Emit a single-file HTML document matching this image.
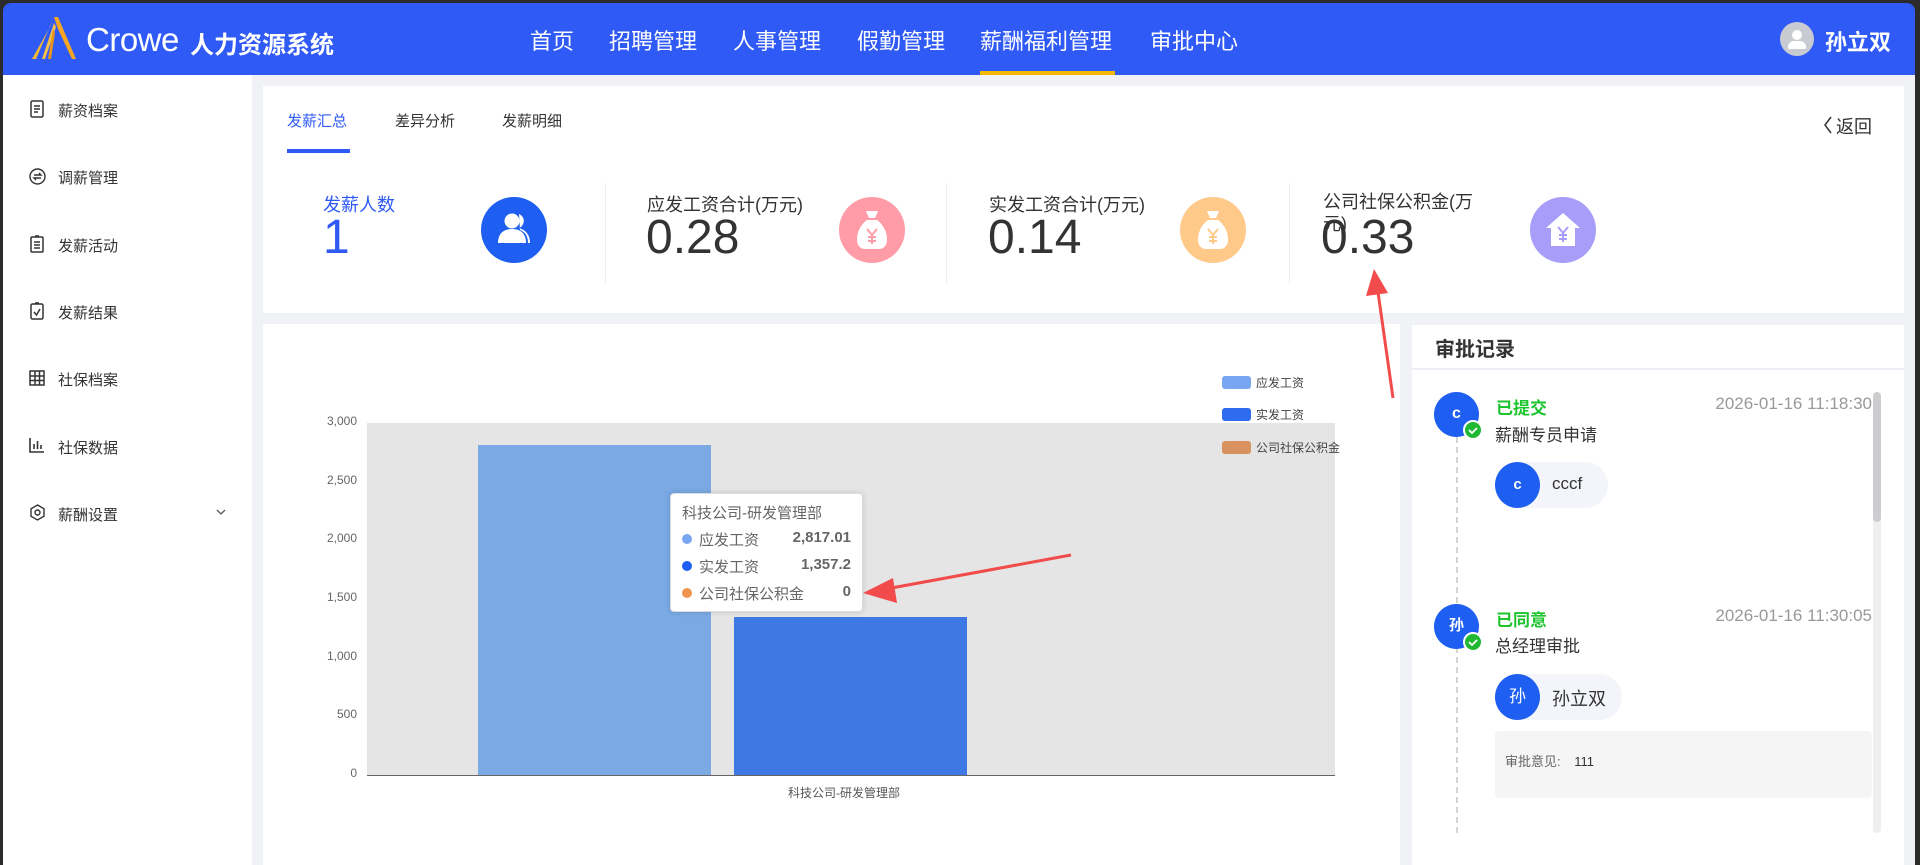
<!DOCTYPE html>
<html><head><meta charset="utf-8"><style>
*{margin:0;padding:0;box-sizing:border-box}
body{width:1920px;height:865px;overflow:hidden;background:#2b2b2b;font-family:"Liberation Sans","Noto Sans CJK SC",sans-serif;position:relative;color:#333}
.a{position:absolute;white-space:nowrap}
#hdr{position:absolute;left:3px;top:3px;width:1912px;height:72px;background:#2F5AF6;border-radius:8px 8px 0 0}
#page{position:absolute;left:3px;top:75px;width:1912px;height:790px;background:#F0F2F5}
.nav{position:absolute;top:24px;font-size:22px;color:#fff}
.side{position:absolute;left:3px;top:75px;width:249px;height:790px;background:#fff}
.si{position:absolute;left:58px;font-size:15px;color:#333}
.card{position:absolute;background:#fff}
.circ{position:absolute;width:66px;height:66px;border-radius:50%}
.st{position:absolute;font-size:18px;color:#333}
.big{position:absolute;font-size:48px;color:#333}
.yl{position:absolute;width:60px;text-align:right;font-size:12px;color:#666}
</style></head><body>
<div id="hdr"></div>
<div id="page"></div>
<svg class="a" style="left:28px;top:17px" width="50" height="44" viewBox="0 0 50 44"><polygon points="26,0 30,0 48,42 44,42 30,12" fill="#F5A623"/><polygon points="26,0 22,10 4,42 8,42" fill="#F5B82E"/><polygon points="26,6 14,42 17,42 28,10" fill="#F7C04A"/><polygon points="25,12 20,42 23,42 27,16" fill="#E8951A"/></svg>
<div class="a" style="left:86px;top:21px;font-size:33px;color:#fff;letter-spacing:-0.5px">Crowe</div>
<div class="a" style="left:190px;top:25px;font-size:24px;color:#fff;font-weight:bold">人力资源系统</div>
<div class="nav" style="left:530px">首页</div>
<div class="nav" style="left:609px">招聘管理</div>
<div class="nav" style="left:733px">人事管理</div>
<div class="nav" style="left:857px">假勤管理</div>
<div class="nav" style="left:980px">薪酬福利管理</div>
<div class="a" style="left:980px;top:71px;width:135px;height:4px;background:#F5B800"></div>
<div class="nav" style="left:1150px">审批中心</div>
<div class="a" style="left:1780px;top:22px;width:34px;height:34px;border-radius:50%;background:#C8CBD2"></div>
<div class="a" style="left:1792px;top:30px;width:10px;height:10px;border-radius:50%;background:#fff"></div>
<div class="a" style="left:1788px;top:41px;width:18px;height:8px;border-radius:6px 6px 1px 1px;background:#fff"></div>
<div class="a" style="left:1825px;top:25px;font-size:22px;color:#fff;font-weight:bold">孙立双</div>

<div class="side"></div>
<svg class="a" style="left:29px;top:100px" width="16" height="18" viewBox="0 0 16 18" fill="none" stroke="#333" stroke-width="1.5"><rect x="2" y="1" width="12" height="16" rx="1.5"/><path d="M5 6h6M5 9h6M5 12h4"/></svg>
<div class="si" style="top:100px">薪资档案</div>
<svg class="a" style="left:29px;top:168px" width="17" height="17" viewBox="0 0 17 17" fill="none" stroke="#333" stroke-width="1.4"><circle cx="8.5" cy="8.5" r="7.5"/><path d="M5 7h7l-2-2M12 10H5l2 2"/></svg>
<div class="si" style="top:167px">调薪管理</div>
<svg class="a" style="left:29px;top:235px" width="16" height="18" viewBox="0 0 16 18" fill="none" stroke="#333" stroke-width="1.5"><rect x="2" y="2" width="12" height="15" rx="1"/><path d="M5 7h6M5 10h6M5 13h6M6 1h4"/></svg>
<div class="si" style="top:235px">发薪活动</div>
<svg class="a" style="left:29px;top:302px" width="16" height="18" viewBox="0 0 16 18" fill="none" stroke="#333" stroke-width="1.5"><rect x="2" y="2" width="12" height="15" rx="1.5"/><path d="M5 10l2.5 3L11 7M6 1h4"/></svg>
<div class="si" style="top:302px">发薪结果</div>
<svg class="a" style="left:29px;top:370px" width="16" height="16" viewBox="0 0 16 16" fill="none" stroke="#333" stroke-width="1.5"><rect x="1" y="1" width="14" height="14"/><path d="M1 6h14M1 10.5h14M6 1v14M10.5 1v14"/></svg>
<div class="si" style="top:369px">社保档案</div>
<svg class="a" style="left:29px;top:437px" width="16" height="16" viewBox="0 0 16 16" fill="none" stroke="#333" stroke-width="1.6"><path d="M1 1v14h14M5 12V7M8.5 12V4M12 12V8"/></svg>
<div class="si" style="top:437px">社保数据</div>
<svg class="a" style="left:29px;top:504px" width="17" height="17" viewBox="0 0 17 17" fill="none" stroke="#333" stroke-width="1.4"><path d="M8.5 1l6.5 3.75v7.5L8.5 16 2 12.25v-7.5z"/><circle cx="8.5" cy="8.5" r="2.5"/></svg>
<div class="si" style="top:504px">薪酬设置</div>
<svg class="a" style="left:216px;top:508px" width="10" height="8" viewBox="0 0 10 8" fill="none" stroke="#555" stroke-width="1.3"><path d="M1 2l4 4 4-4"/></svg>

<div class="card" style="left:263px;top:86px;width:1641px;height:227px"></div>
<div class="a" style="left:287px;top:110px;font-size:15px;color:#2F5AF6">发薪汇总</div>
<div class="a" style="left:287px;top:149px;width:63px;height:4px;background:#2F5AF6"></div>
<div class="a" style="left:395px;top:110px;font-size:15px;color:#333">差异分析</div>
<div class="a" style="left:502px;top:110px;font-size:15px;color:#333">发薪明细</div>
<svg class="a" style="left:1823px;top:115px" width="10" height="20" viewBox="0 0 10 20" fill="none" stroke="#333" stroke-width="1.5"><path d="M8 2L2 10l6 8"/></svg>
<div class="a" style="left:1836px;top:113px;font-size:18px;color:#333">返回</div>
<div class="a" style="left:605px;top:183px;width:1px;height:100px;background:#EBEEF5"></div>
<div class="a" style="left:946px;top:183px;width:1px;height:100px;background:#EBEEF5"></div>
<div class="a" style="left:1289px;top:183px;width:1px;height:100px;background:#EBEEF5"></div>

<div class="st" style="left:323px;top:191px;color:#2F5AF6">发薪人数</div>
<div class="big" style="left:323px;top:210px;color:#2F5AF6">1</div>
<div class="circ" style="left:481px;top:197px;background:#1E5EF0"></div>
<svg class="a" style="left:495px;top:211px" width="40" height="38" viewBox="0 0 40 38" fill="#fff"><circle cx="17" cy="10" r="7.5"/><path d="M3 32c0-10 6-14 14-14s14 4 14 14z"/><path d="M24 3a7.5 7.5 0 0 1 0 14c6 2 11 6 11 15h-2c0-7-3-11-8-13" /></svg>

<div class="st" style="left:647px;top:191px">应发工资合计(万元)</div>
<div class="big" style="left:646px;top:210px">0.28</div>
<div class="circ" style="left:839px;top:197px;background:#FF9CA8"></div>
<svg class="a" style="left:853px;top:209px" width="38" height="42" viewBox="0 0 38 42" fill="#fff"><path d="M13 2h12l-3 7h-6z"/><path d="M14 11h10c8 6 10 14 10 20 0 6-4 9-8 9H12c-4 0-8-3-8-9 0-6 2-14 10-20z"/><path d="M14 20l5 6 5-6M19 26v9M15 28h8M15 32h8" stroke="#FF9CA8" stroke-width="2" fill="none"/></svg>

<div class="st" style="left:989px;top:191px">实发工资合计(万元)</div>
<div class="big" style="left:988px;top:210px">0.14</div>
<div class="circ" style="left:1180px;top:197px;background:#FFC98A"></div>
<svg class="a" style="left:1194px;top:209px" width="38" height="42" viewBox="0 0 38 42" fill="#fff"><path d="M13 2h12l-3 7h-6z"/><path d="M14 11h10c8 6 10 14 10 20 0 6-4 9-8 9H12c-4 0-8-3-8-9 0-6 2-14 10-20z"/><path d="M14 20l5 6 5-6M19 26v9M15 28h8M15 32h8" stroke="#FFC98A" stroke-width="2" fill="none"/></svg>

<div class="a" style="left:1323px;top:191px;width:152px;font-size:18px;color:#333;white-space:normal;line-height:22px">公司社保公积金(万元)</div>
<div class="big" style="left:1321px;top:210px">0.33</div>
<div class="circ" style="left:1530px;top:197px;background:#A89EFA"></div>
<svg class="a" style="left:1544px;top:212px" width="38" height="36" viewBox="0 0 38 36" fill="#fff"><path d="M19 1L2 16h5v18h24V16h5z"/><path d="M14 15l5 6 5-6M19 21v9M15 23h8M15 27h8" stroke="#A89EFA" stroke-width="2" fill="none"/></svg>

<div class="card" style="left:263px;top:324px;width:1137px;height:541px"></div>
<div class="a" style="left:367px;top:423px;width:968px;height:352px;background:#E5E5E5"></div>
<div class="a" style="left:367px;top:775px;width:968px;height:1px;background:#666"></div>
<div class="yl" style="left:297px;top:414px">3,000</div>
<div class="yl" style="left:297px;top:473px">2,500</div>
<div class="yl" style="left:297px;top:531px">2,000</div>
<div class="yl" style="left:297px;top:590px">1,500</div>
<div class="yl" style="left:297px;top:649px">1,000</div>
<div class="yl" style="left:297px;top:707px">500</div>
<div class="yl" style="left:297px;top:766px">0</div>
<div class="a" style="left:478px;top:445px;width:233px;height:330px;background:#7AA9E4"></div>
<div class="a" style="left:734px;top:617px;width:233px;height:158px;background:#3D78E3"></div>
<div class="a" style="left:788px;top:784px;font-size:12px;color:#555">科技公司-研发管理部</div>
<div class="a" style="left:1222px;top:376px;width:29px;height:13px;border-radius:3px;background:#78A6F0"></div>
<div class="a" style="left:1256px;top:374px;font-size:12px;color:#444">应发工资</div>
<div class="a" style="left:1222px;top:408px;width:29px;height:13px;border-radius:3px;background:#2E6BEF"></div>
<div class="a" style="left:1256px;top:406px;font-size:12px;color:#444">实发工资</div>
<div class="a" style="left:1222px;top:441px;width:29px;height:13px;border-radius:3px;background:#D9925F"></div>
<div class="a" style="left:1256px;top:439px;font-size:12px;color:#444">公司社保公积金</div>

<div class="a" style="left:670px;top:493px;width:193px;height:119px;background:#fff;border:1px solid #ddd;border-radius:4px;box-shadow:0 0 6px rgba(0,0,0,.15)"></div>
<div class="a" style="left:682px;top:502px;font-size:15px;color:#666">科技公司-研发管理部</div>
<div class="a" style="left:682px;top:534px;width:10px;height:10px;border-radius:50%;background:#78A6F0"></div>
<div class="a" style="left:699px;top:529px;font-size:15px;color:#666">应发工资</div>
<div class="a" style="left:783px;top:529px;width:68px;text-align:right;font-size:15px;font-weight:bold;color:#666">2,817.01</div>
<div class="a" style="left:682px;top:561px;width:10px;height:10px;border-radius:50%;background:#1E5EF0"></div>
<div class="a" style="left:699px;top:556px;font-size:15px;color:#666">实发工资</div>
<div class="a" style="left:783px;top:556px;width:68px;text-align:right;font-size:15px;font-weight:bold;color:#666">1,357.2</div>
<div class="a" style="left:682px;top:588px;width:10px;height:10px;border-radius:50%;background:#F0954F"></div>
<div class="a" style="left:699px;top:583px;font-size:15px;color:#666">公司社保公积金</div>
<div class="a" style="left:783px;top:583px;width:68px;text-align:right;font-size:15px;font-weight:bold;color:#666">0</div>

<div class="card" style="left:1412px;top:325px;width:492px;height:540px"></div>
<div class="a" style="left:1435px;top:333px;font-size:20px;font-weight:bold;color:#333">审批记录</div>
<div class="a" style="left:1412px;top:368px;width:492px;height:2px;background:#EBEEF5"></div>
<div class="a" style="left:1873px;top:392px;width:8px;height:441px;border-radius:4px;background:#EFEFEF"></div>
<div class="a" style="left:1873px;top:392px;width:8px;height:130px;border-radius:4px;background:#CDCDCF"></div>
<div class="a" style="left:1456px;top:437px;width:0;height:396px;border-left:2px dashed #D5D5D5"></div>

<div class="a" style="left:1434px;top:392px;width:45px;height:45px;border-radius:50%;background:#1E5EF0;color:#fff;font-weight:bold;font-size:16px;text-align:center;line-height:44px">c</div>
<div class="a" style="left:1463px;top:420px;width:20px;height:20px;border-radius:50%;background:#21B833;border:2px solid #fff"></div>
<svg class="a" style="left:1467px;top:425px" width="12" height="10" viewBox="0 0 12 10" fill="none" stroke="#fff" stroke-width="1.8"><path d="M2 5l3 3 5-5"/></svg>
<div class="a" style="left:1496px;top:394px;font-size:17px;font-weight:bold;color:#1DC42D">已提交</div>
<div class="a" style="left:1700px;top:394px;width:172px;text-align:right;font-size:17px;color:#999">2026-01-16 11:18:30</div>
<div class="a" style="left:1495px;top:421px;font-size:17px;color:#333">薪酬专员申请</div>
<div class="a" style="left:1495px;top:462px;width:113px;height:46px;border-radius:23px;background:#F3F5FA"></div>
<div class="a" style="left:1495px;top:462px;width:45px;height:46px;border-radius:50%;background:#1E5EF0;color:#fff;font-weight:bold;font-size:15px;text-align:center;line-height:46px">c</div>
<div class="a" style="left:1552px;top:474px;font-size:17px;color:#333">cccf</div>

<div class="a" style="left:1434px;top:604px;width:45px;height:45px;border-radius:50%;background:#1E5EF0;color:#fff;font-weight:bold;font-size:15px;text-align:center;line-height:44px">孙</div>
<div class="a" style="left:1463px;top:632px;width:20px;height:20px;border-radius:50%;background:#21B833;border:2px solid #fff"></div>
<svg class="a" style="left:1467px;top:637px" width="12" height="10" viewBox="0 0 12 10" fill="none" stroke="#fff" stroke-width="1.8"><path d="M2 5l3 3 5-5"/></svg>
<div class="a" style="left:1496px;top:606px;font-size:17px;font-weight:bold;color:#1DC42D">已同意</div>
<div class="a" style="left:1700px;top:606px;width:172px;text-align:right;font-size:17px;color:#999">2026-01-16 11:30:05</div>
<div class="a" style="left:1495px;top:632px;font-size:17px;color:#333">总经理审批</div>
<div class="a" style="left:1495px;top:674px;width:127px;height:46px;border-radius:23px;background:#F3F5FA"></div>
<div class="a" style="left:1495px;top:674px;width:45px;height:46px;border-radius:50%;background:#1E5EF0;color:#fff;font-size:17px;text-align:center;line-height:46px">孙</div>
<div class="a" style="left:1552px;top:685px;font-size:18px;color:#333">孙立双</div>
<div class="a" style="left:1495px;top:731px;width:377px;height:67px;border-radius:4px;background:#F5F5F6"></div>
<div class="a" style="left:1505px;top:751px;font-size:13px;color:#666">审批意见: <span style="color:#333;margin-left:10px">111</span></div>

<svg class="a" style="left:0;top:0" width="1920" height="865" viewBox="0 0 1920 865"><g stroke="#F24B4B" stroke-width="3" fill="#F24B4B"><line x1="1071" y1="555" x2="875" y2="591"/><polygon points="863,593 893,578 897,603" stroke="none"/><line x1="1393" y1="398" x2="1377" y2="285"/><polygon points="1374,269 1366,296 1388,293" stroke="none"/></g></svg>
</body></html>
